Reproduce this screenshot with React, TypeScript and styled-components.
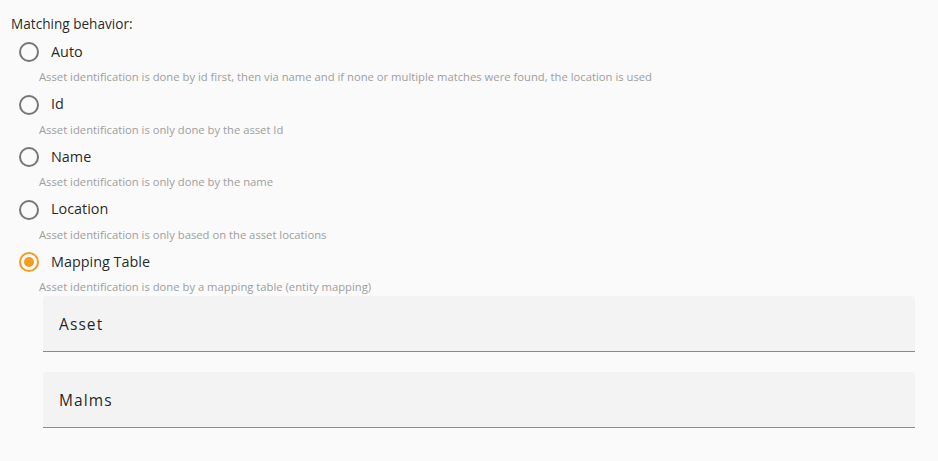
import React from "react";
import styled, { createGlobalStyle } from "styled-components";

const Global = createGlobalStyle`
  html, body { margin: 0; padding: 0; background: #fafafa; }
  body { font-family: "Open Sans", Lato, sans-serif; color: rgba(0,0,0,0.87); }
  * { box-sizing: border-box; }
`;

const Page = styled.div`
  padding: 16px 23px 0 11px;
  display: flex;
  flex-direction: column;
`;

const Heading = styled.div`
  font-size: 13.6px;
  line-height: 16px;
  color: rgba(0,0,0,0.87);
`;

const Options = styled.div`
  display: flex;
  flex-direction: column;
  padding-left: 6px;
`;

const OptionRow = styled.label`
  display: flex;
  align-items: center;
  height: 40px;
  gap: 10px;
  cursor: pointer;
`;

const OptionLabel = styled.span`
  font-size: 14.4px;
  line-height: 18px;
  margin-top: -1px;
  color: rgba(0,0,0,0.87);
`;

const Description = styled.div`
  margin-top: -2px;
  padding-left: 22px;
  font-size: 11.25px;
  line-height: 14.5px;
  color: #9e9e9e;
  white-space: nowrap;
`;

const Fields = styled.div`
  display: flex;
  flex-direction: column;
  gap: 20px;
  margin: 1.5px 0 0 32px;
`;

const Field = styled.div`
  height: 56px;
  background: #f3f3f3;
  border-radius: 4px 4px 0 0;
  border-bottom: 1px solid #8a8a8a;
  display: flex;
  align-items: center;
  padding: 0 16px;
  font-size: 15.5px;
  letter-spacing: 1.1px;
  color: rgba(0,0,0,0.87);
`;

const RadioIcon = ({ checked }: { checked: boolean }) => (
  <svg width="24" height="24" viewBox="0 0 24 24">
    <circle cx="12" cy="12" r="9" fill="none" stroke={checked ? "#f39c1f" : "#767676"} strokeWidth="2" />
    {checked && <circle cx="12" cy="12" r="5" fill="#f39c1f" />}
  </svg>
);

const options = [
  { label: "Auto", desc: "Asset identification is done by id first, then via name and if none or multiple matches were found, the location is used" },
  { label: "Id", desc: "Asset identification is only done by the asset Id" },
  { label: "Name", desc: "Asset identification is only done by the name" },
  { label: "Location", desc: "Asset identification is only based on the asset locations" },
  { label: "Mapping Table", desc: "Asset identification is done by a mapping table (entity mapping)" },
];

export default function App() {
  const selected = "Mapping Table";
  return (
    <Page>
      <Global />
      <Heading>Matching behavior:</Heading>
      <Options>
        {options.map((o) => (
          <React.Fragment key={o.label}>
            <OptionRow>
              <RadioIcon checked={o.label === selected} />
              <OptionLabel>{o.label}</OptionLabel>
            </OptionRow>
            <Description>{o.desc}</Description>
          </React.Fragment>
        ))}
      </Options>
      <Fields>
        <Field>Asset</Field>
        <Field>Malms</Field>
      </Fields>
    </Page>
  );
}
